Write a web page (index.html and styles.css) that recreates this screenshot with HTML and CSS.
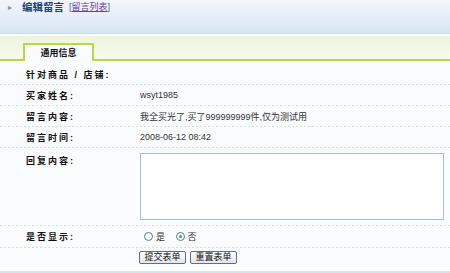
FILE: index.html
```html
<!DOCTYPE html>
<html lang="zh-CN">

<head>
    <meta charset="UTF-8">
    <title>编辑留言</title>
    <link rel="stylesheet" href="styles.css">
</head>

<body>
    <div class="title-bar">
        <span class="arrow">▸</span>
        <span class="title">编辑留言</span>
        <span class="links">[<a href="#">留言列表</a>]</span>
    </div>
    <div class="tab-bar">
        <span class="tab">通用信息</span>
    </div>
    <div class="form">
        <div class="row row-first">
            <div class="label">针对商品 / 店铺:</div>
            <div class="value"></div>
        </div>
        <div class="row">
            <div class="label">买家姓名:</div>
            <div class="value">wsyt1985</div>
        </div>
        <div class="row">
            <div class="label">留言内容:</div>
            <div class="value">我全买光了,买了999999999件,仅为测试用</div>
        </div>
        <div class="row">
            <div class="label">留言时间:</div>
            <div class="value">2008-06-12 08:42</div>
        </div>
        <div class="row row-tall">
            <div class="label">回复内容:</div>
            <div class="value"><textarea></textarea></div>
        </div>
        <div class="row row-radio">
            <div class="label">是否显示:</div>
            <div class="value">
                <label class="radio"><span class="dot"></span>是</label>
                <label class="radio"><span class="dot on"></span>否</label>
            </div>
        </div>
        <div class="row row-btns">
            <div class="label"></div>
            <div class="value">
                <span class="btn">提交表单</span>
                <span class="btn">重置表单</span>
            </div>
        </div>
    </div>
    <div class="foot"></div>
</body>

</html>
```

FILE: styles.css
```css
* {
    margin: 0;
    padding: 0;
    box-sizing: border-box;
}

html,
body {
    width: 450px;
    height: 273px;
    overflow: hidden;
    background-color: #fbfcfe;
    font-family: "Liberation Sans", "Noto Sans CJK SC", sans-serif;
    font-size: 9px;
    color: #222;
}
/* 顶部标题 */

.title-bar {
    height: 34px;
    padding: 1px 0 0 8px;
    display: flex;
    align-items: flex-start;
    background: linear-gradient(#f3f6fb, #d9e5f3);
    border-bottom: 1px solid #cbdaea;
}

.title-bar .arrow {
    color: #8593a8;
    font-size: 8px;
    width: 14px;
    line-height: 13px;
}

.title-bar .title {
    color: #1d3f7a;
    font-weight: bold;
    font-size: 10.5px;
    line-height: 13px;
}

.title-bar .links {
    color: #3a62b0;
    margin-left: 5px;
    line-height: 13px;
}

.title-bar .links a {
    color: #6a3fa0;
    text-decoration: underline;
}
/* 选项卡 */

.tab-bar {
    margin-top: 2px;
    height: 25px;
    padding: 7px 0 0 23px;
    background: linear-gradient(#eef5dc, #f8faee);
    border-bottom: 2px solid #b6d94a;
    display: flex;
    align-items: flex-end;
}

.tab {
    width: 71px;
    height: 18px;
    margin-bottom: -2px;
    line-height: 16px;
    text-align: center;
    font-weight: bold;
    color: #111;
    background-color: #fbfcfe;
    border: 2px solid #b6d94a;
    border-bottom: none;
}
/* 表单 */

.row {
    display: flex;
    align-items: center;
    height: 21px;
    padding-bottom: 1px;
    background-image: repeating-linear-gradient(90deg, #d9dbe0 0 2px, transparent 2px 4px);
    background-size: 100% 1px;
    background-repeat: no-repeat;
    background-position: bottom left;
}

.row-first {
    height: 24px;
    padding-top: 3px;
}

.label {
    width: 140px;
    padding-left: 26px;
    font-weight: bold;
    letter-spacing: 2px;
    color: #111;
}

.value {
    flex: 1;
    color: #333;
}

.row-tall {
    height: 78px;
    align-items: flex-start;
}

.row-tall .label {
    padding-top: 6px;
}

.row-tall textarea {
    display: block;
    width: 304px;
    height: 67px;
    margin-top: 5px;
    border: 1px solid #a8bed3;
    background-color: #fff;
    resize: none;
}

.row-radio {
    height: 22px;
}

.radio {
    display: inline-flex;
    align-items: center;
    margin-left: 4px;
    margin-right: 4px;
}

.radio .dot {
    width: 9px;
    height: 9px;
    border: 1px solid #56789f;
    border-radius: 50%;
    background-color: #fff;
    margin-right: 3px;
    position: relative;
}

.radio .dot.on::after {
    content: "";
    position: absolute;
    left: 2px;
    top: 2px;
    width: 3px;
    height: 3px;
    border-radius: 50%;
    background-color: #3fae2a;
}

.row-btns {
    height: 19px;
    padding: 3px 0 0;
    align-items: flex-start;
    background: none;
}

.row-btns .value {
    display: flex;
    gap: 4px;
    margin-left: -1px;
}

.btn {
    display: block;
    width: 47px;
    height: 13px;
    line-height: 11px;
    text-align: center;
    border: 1px solid #5f6f82;
    border-radius: 2px;
    background: linear-gradient(#ffffff, #e1e5ea);
    color: #111;
}

.foot {
    margin-top: 4px;
    height: 4px;
    background-color: #d6e3ef;
}
```
